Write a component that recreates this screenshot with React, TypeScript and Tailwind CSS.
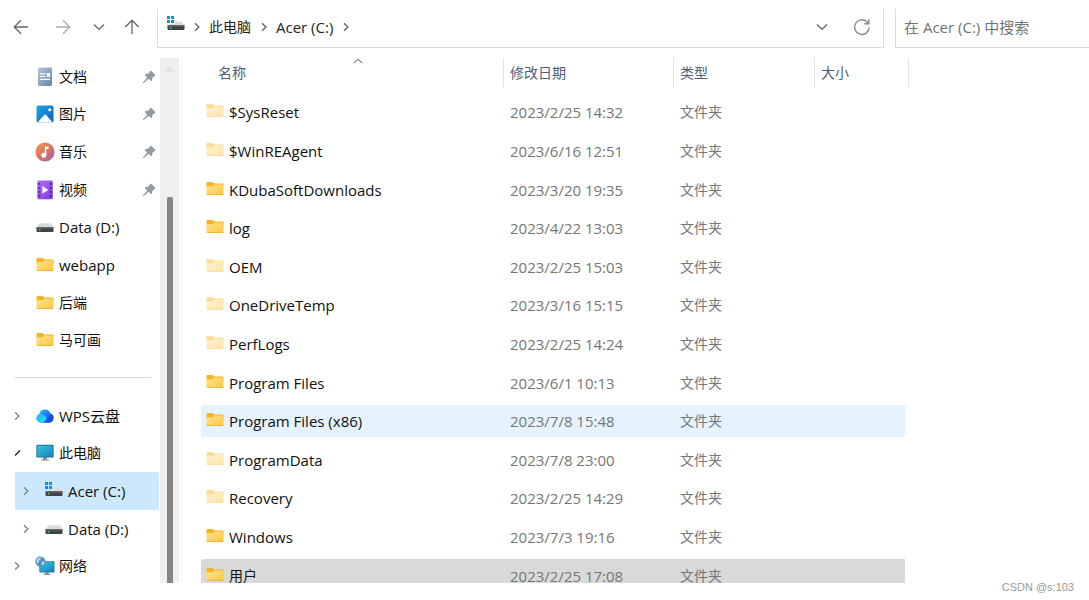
import React from "react";
import clsx from "clsx";

type IconProps = { className?: string };

const FolderIcon: React.FC<IconProps & { faded?: boolean }> = ({ className, faded }) => (
  <svg
    viewBox="0 0 18 16"
    className={clsx("w-[18px] h-4 shrink-0", faded && "opacity-45", className)}
  >
    <defs>
      <linearGradient id="folder" x1="0" y1="0" x2="1" y2="1">
        <stop offset="0" stopColor="#ffe394" />
        <stop offset="1" stopColor="#fdc63a" />
      </linearGradient>
    </defs>
    <path d="M0.5 2Q0.5 1 1.5 1H6Q6.6 1 7 1.5L8.2 2.6H16.7Q17.5 2.6 17.5 3.4V7H0.5Z" fill="#f7b31b" />
    <path d="M0.5 5.2H6.2Q6.8 5.2 7.2 4.8L8.3 3.4H17.5V13.2Q17.5 14 16.7 14H1.3Q0.5 14 0.5 13.2Z" fill="url(#folder)" />
    <path d="M0.6 13.5Q0.8 14.1 1.4 14.1H16.6Q17.2 14.1 17.4 13.5Z" fill="#e2a025" />
  </svg>
);

const DriveIcon: React.FC<IconProps & { system?: boolean }> = ({ className, system }) => (
  <svg viewBox="0 0 18 18" className={clsx("size-[18px] shrink-0", className)}>
    {system && (
      <path d="M0 0H3V3H0ZM4 0H7V3H4ZM0 4H3V7H0ZM4 4H7V7H4Z" fill="#1390df" />
    )}
    <path
      d={system ? "M8 5.4H14.7L17.6 9.5H1L2.5 8H8Z" : "M3.3 5.2H14.7L17.6 9.6H0.4Z"}
      fill="#d9dbde"
    />
    <rect x="0.5" y="9" width="17" height="5" rx="0.7" fill="#414345" />
    <rect x="0.5" y="9" width="17" height="1.5" rx="0.7" fill="#65686a" />
    <rect x="3" y="11" width="1.6" height="1.6" fill="#35c94b" />
  </svg>
);

const DocumentIcon = () => (
  <svg viewBox="0 0 18 20" className="w-[18px] h-5 shrink-0">
    <defs>
      <linearGradient id="doc" x1="0" y1="0" x2="1" y2="1">
        <stop offset="0" stopColor="#b3c7da" />
        <stop offset="1" stopColor="#6385a8" />
      </linearGradient>
    </defs>
    <rect x="2" y="0.5" width="14" height="18.5" rx="1.4" fill="url(#doc)" />
    <path d="M4 6.8H9.5M4 9.5H9.5M4 12.3H14" stroke="#fff" strokeWidth="1.2" />
    <rect x="10.7" y="6.2" width="3.4" height="3.6" fill="#fff" />
  </svg>
);

const PictureIcon = () => (
  <svg viewBox="0 0 18 18" className="size-[18px] shrink-0">
    <defs>
      <linearGradient id="pic" x1="0" y1="0" x2="1" y2="1">
        <stop offset="0" stopColor="#1ca5e8" />
        <stop offset="1" stopColor="#0a62bd" />
      </linearGradient>
    </defs>
    <rect x="0.5" y="0.5" width="17" height="17" rx="1.8" fill="url(#pic)" />
    <path d="M2 17L8.4 9.8Q9.2 9.1 10 9.8L16.2 17Q16 17.4 15.5 17.4H2.7Z" fill="#fff" />
    <circle cx="13.7" cy="4.8" r="1.5" fill="#fff" />
  </svg>
);

const MusicIcon = () => (
  <svg viewBox="0 0 20 20" className="-mx-px size-5 shrink-0">
    <defs>
      <linearGradient id="music" x1="0" y1="0" x2="1" y2="1">
        <stop offset="0.1" stopColor="#f29150" />
        <stop offset="0.5" stopColor="#d97462" />
        <stop offset="1" stopColor="#a45eb5" />
      </linearGradient>
    </defs>
    <circle cx="10" cy="10" r="9.6" fill="url(#music)" />
    <circle cx="8.8" cy="13.2" r="2.5" fill="#fff" />
    <path d="M9.8 4.5H13.6V7H11.3V13.2H9.8Z" fill="#fff" />
  </svg>
);

const VideoIcon = () => (
  <svg viewBox="0 0 18 20" className="w-[18px] h-5 shrink-0">
    <defs>
      <linearGradient id="video" x1="0" y1="0" x2="1" y2="1">
        <stop offset="0" stopColor="#b670f4" />
        <stop offset="1" stopColor="#7a3be0" />
      </linearGradient>
    </defs>
    <rect x="1.2" y="0.6" width="15.6" height="18.6" rx="1.4" fill="url(#video)" />
    <path
      d="M3.4 3V19M14.8 3V19"
      stroke="#4a1a93"
      strokeWidth="1.7"
      strokeDasharray="1.7 2.3"
    />
    <path d="M6.4 6L12.2 9.9L6.4 13.8Z" fill="#fff" />
  </svg>
);

const CloudIcon = () => (
  <svg viewBox="0 0 18 18" className="size-[18px] shrink-0">
    <defs>
      <linearGradient id="cloud" x1="0" y1="0" x2="1" y2="0.5">
        <stop offset="0.1" stopColor="#1fc8f4" />
        <stop offset="0.6" stopColor="#1a80fa" />
        <stop offset="1" stopColor="#1455ea" />
      </linearGradient>
      <linearGradient id="puff" x1="0" y1="0" x2="1" y2="0.8">
        <stop offset="0" stopColor="#1fb0f6" />
        <stop offset="1" stopColor="#25e0ea" />
      </linearGradient>
    </defs>
    <path d="M4.5 15.5A4.3 4.3 0 0 1 3.2 7.2A5.8 5.8 0 0 1 14.4 6.6A4.6 4.6 0 0 1 13.4 15.5Z" fill="url(#cloud)" />
    <path d="M3.2 7.2Q8.4 6.6 10.4 11.2Q9 15.4 4.5 15.5A4.3 4.3 0 0 1 3.2 7.2Z" fill="url(#puff)" />
    <path d="M6 15.5Q12.5 14.6 14.4 6.6A4.6 4.6 0 0 1 13.4 15.5Z" fill="#134fe6" />
  </svg>
);

const Monitor = () => (
  <>
    <defs>
      <linearGradient id="screen" x1="0" y1="0" x2="1" y2="1">
        <stop offset="0" stopColor="#35c4d6" />
        <stop offset="1" stopColor="#1587c4" />
      </linearGradient>
    </defs>
    <path d="M7 13H11V15.4H13V16.4H5V15.4H7Z" fill="#8b9399" />
    <rect x="0.4" y="0.8" width="17.2" height="12.8" rx="0.9" fill="#236c92" />
    <rect x="1.3" y="1.7" width="15.4" height="11" fill="url(#screen)" />
  </>
);

const ComputerIcon = () => (
  <svg viewBox="0 0 18 18" className="size-[18px] shrink-0">
    <Monitor />
  </svg>
);

const NetworkIcon = () => (
  <svg viewBox="0 0 20 20" className="-mx-px size-5 shrink-0">
    <g transform="translate(4 4.5) scale(0.88)">
      <Monitor />
    </g>
    <circle cx="5.4" cy="5.6" r="5.1" fill="#5195bd" />
    <path d="M2 3.4Q4 1.2 6.4 1.6Q5.8 3.4 4 4.4Q3.8 6.6 2.4 7.4Q0.9 5.6 2 3.4ZM7 6.2Q8.8 4.8 9.6 6Q9 8.6 7.4 9.4Q6.2 8 7 6.2Z" fill="#c3e1ee" />
  </svg>
);

const PinIcon = () => (
  <svg viewBox="0 0 14 14" className="mr-[3px] size-[14px] shrink-0">
    <path
      d="M8.2 1.1Q8.8 0.5 9.5 1.1L13.1 4.7Q13.6 5.4 12.8 6L10.6 7.4L9.9 10.4Q9.5 11.4 8.7 10.7L6.5 8.7L1.8 13.1L1 13.2L1 12.4L5.1 7.4L3.1 5.4Q2.6 4.5 3.6 4.1L6.6 3.5Z"
      fill="#919ba3"
    />
  </svg>
);

const Chevron: React.FC<IconProps> = ({ className }) => (
  <svg viewBox="0 0 6 10" className={clsx("w-1.5 h-2.5 shrink-0", className)}>
    <path d="M1 1.2L4.9 5L1 8.8" fill="none" stroke="currentColor" strokeWidth="1.4" />
  </svg>
);

const DownIcon = () => (
  <svg viewBox="0 0 14 14" className="size-3.5">
    <path d="M2 4.6L7 9.4L12 4.6" fill="none" stroke="currentColor" strokeWidth="1.4" />
  </svg>
);

const ArrowIcon: React.FC<IconProps> = ({ className }) => (
  <svg viewBox="0 0 16 16" className={clsx("size-4", className)}>
    <path d="M15 8H1.2M8 1.3L1.2 8L8 14.7" fill="none" stroke="currentColor" strokeWidth="1.3" />
  </svg>
);

type SideItem = {
  label: string;
  icon: React.ReactNode;
  pinned?: boolean;
  nested?: boolean;
  selected?: boolean;
  expand?: "open" | "closed";
};

const quickAccess: SideItem[] = [
  { label: "文档", icon: <DocumentIcon />, pinned: true },
  { label: "图片", icon: <PictureIcon />, pinned: true },
  { label: "音乐", icon: <MusicIcon />, pinned: true },
  { label: "视频", icon: <VideoIcon />, pinned: true },
  { label: "Data (D:)", icon: <DriveIcon /> },
  { label: "webapp", icon: <FolderIcon /> },
  { label: "后端", icon: <FolderIcon /> },
  { label: "马可画", icon: <FolderIcon /> },
];

const locations: SideItem[] = [
  { label: "WPS云盘", icon: <CloudIcon />, expand: "closed" },
  { label: "此电脑", icon: <ComputerIcon />, expand: "open" },
  { label: "Acer (C:)", icon: <DriveIcon system />, expand: "closed", nested: true, selected: true },
  { label: "Data (D:)", icon: <DriveIcon />, expand: "closed", nested: true },
  { label: "网络", icon: <NetworkIcon />, expand: "closed" },
];

const files = [
  { name: "$SysReset", date: "2023/2/25 14:32", hidden: true },
  { name: "$WinREAgent", date: "2023/6/16 12:51", hidden: true },
  { name: "KDubaSoftDownloads", date: "2023/3/20 19:35" },
  { name: "log", date: "2023/4/22 13:03" },
  { name: "OEM", date: "2023/2/25 15:03", hidden: true },
  { name: "OneDriveTemp", date: "2023/3/16 15:15", hidden: true },
  { name: "PerfLogs", date: "2023/2/25 14:24", hidden: true },
  { name: "Program Files", date: "2023/6/1 10:13" },
  { name: "Program Files (x86)", date: "2023/7/8 15:48", row: "bg-[#e5f3ff]" },
  { name: "ProgramData", date: "2023/7/8 23:00", hidden: true },
  { name: "Recovery", date: "2023/2/25 14:29", hidden: true },
  { name: "Windows", date: "2023/7/3 19:16" },
  { name: "用户", date: "2023/2/25 17:08", row: "bg-[#d9d9d9]" },
];

// latin labels are set one size larger than the purely Chinese ones
const labelSize = (label: string) =>
  /[a-z]/i.test(label) ? "text-[15px] leading-5" : "text-sm";

const SidebarItem: React.FC<{ item: SideItem }> = ({ item }) => (
  <a
    href="#"
    className={clsx(
      "flex items-center rounded-r-xs",
      item.nested && "pl-2",
      item.selected && "bg-[#cce8ff]"
    )}
  >
    <span className={clsx("flex shrink-0", item.nested ? "w-[22px]" : "w-[21px] overflow-hidden")}>
      {item.expand === "closed" && (
        <Chevron className={clsx("text-[#858585]", !item.nested && "-ml-px")} />
      )}
      {item.expand === "open" && (
        <svg viewBox="0 0 6 8" className="w-1.5 h-2">
          <path d="M0 6.5L5 1.5" fill="none" stroke="#222" strokeWidth="1.5" />
        </svg>
      )}
    </span>
    {item.icon}
    <span className={clsx("ml-[5px] flex-1 whitespace-nowrap", labelSize(item.label))}>
      {item.label}
    </span>
    {item.pinned && <PinIcon />}
  </a>
);

const Toolbar = () => (
  <header className="flex pt-[9px] text-[#666]">
    <div className="flex w-[157px] shrink-0 items-center justify-between pl-[13px] pr-[17px] pb-[3px]">
      <button aria-label="Back">
        <ArrowIcon />
      </button>
      <button aria-label="Forward" className="ml-2 text-[#aaa]">
        <ArrowIcon className="rotate-180" />
      </button>
      <button aria-label="Recent locations" className="ml-1">
        <DownIcon />
      </button>
      <button aria-label="Up">
        <ArrowIcon className="rotate-90" />
      </button>
    </div>
    <div className="flex h-[39px] flex-1 items-center border border-t-0 border-[#dcdcdc] pl-[9px] pr-3 pb-[3px]">
      <DriveIcon system className="mb-1" />
      <Chevron className="ml-[9px]" />
      <button className="ml-[9px] text-sm text-[#222]">此电脑</button>
      <Chevron className="ml-2.5" />
      <button className="ml-[9px] text-[15px] leading-5 text-[#222]">Acer (C:)</button>
      <Chevron className="ml-2.5" />
      <button aria-label="Show history" className="ml-auto">
        <DownIcon />
      </button>
      <button aria-label="Refresh" className="ml-6 text-[#888]">
        <svg viewBox="0 0 18 18" className="size-[18px]">
          <path
            d="M16.2 9.5A7.3 7.3 0 1 1 13.8 3.7L15.8 5.6M15.8 1.2V5.7H11.3"
            fill="none"
            stroke="currentColor"
            strokeWidth="1.4"
          />
        </svg>
      </button>
    </div>
    <div className="ml-[11px] flex w-[194px] shrink-0 border-b border-l border-[#dcdcdc]">
      <input
        type="text"
        aria-label="搜索"
        placeholder="在 Acer (C:) 中搜索"
        className="w-full pl-2 pb-0.5 text-[15px] outline-none placeholder:text-[#737373]"
      />
    </div>
  </header>
);

const Sidebar = () => (
  <nav className="h-[527px] w-[160px] shrink-0 grid auto-rows-fr pl-[15px] pr-px">
    {quickAccess.map((item) => (
      <SidebarItem key={item.label} item={item} />
    ))}
    <div className="flex items-center pr-2">
      <hr className="w-full border-[#d9d9d9]" />
    </div>
    {locations.map((item) => (
      <SidebarItem key={item.label} item={item} />
    ))}
  </nav>
);

const Scrollbar = () => (
  <div className="flex w-[19px] shrink-0 flex-col items-center bg-[#efefef] pt-[7px]">
    <svg viewBox="0 0 9 7" className="w-[9px] h-[7px] shrink-0">
      <path d="M4.5 0L9 7H0Z" fill="#e3e3e3" />
    </svg>
    <div className="mt-[125px] w-1.5 flex-1 rounded-t-xs bg-[#858585]" />
  </div>
);

const th = "border-r border-[#e2e2e2] pl-1.5 h-[29px] flex items-center";
const td = "border-y-3 border-transparent bg-clip-padding p-0";

const FileTable = () => (
  <table className="h-[537px] w-[708px] table-fixed border-separate border-spacing-0 text-left">
    <thead className="text-sm text-[#4c607a]">
      <tr className="h-[35px] align-top">
        <th className="w-[303px] p-0 font-normal">
          <div className={clsx(th, "relative")}>
            <button className="ml-[11px]">名称</button>
            <svg viewBox="0 0 10 6" className="absolute left-[152px] top-0 w-2.5 h-1.5">
              <path d="M0.8 5.2L5 1.2L9.2 5.2" fill="none" stroke="#777" strokeWidth="1.1" />
            </svg>
          </div>
        </th>
        <th className="w-[170px] p-0 font-normal">
          <div className={th}>
            <button>修改日期</button>
          </div>
        </th>
        <th className="w-[141px] p-0 font-normal">
          <div className={th}>
            <button>类型</button>
          </div>
        </th>
        <th className="p-0 font-normal">
          <div className={th}>
            <button>大小</button>
          </div>
        </th>
      </tr>
    </thead>
    <tbody className="text-sm text-[#767676]">
      {files.map((file) => (
        <tr key={file.name}>
          <td className={clsx(td, file.row, "rounded-l-sm")}>
            <div className="flex items-center gap-[5px] pl-[5px] text-[#111]">
              <FolderIcon faded={file.hidden} className="mb-0.5" />
              <span className={labelSize(file.name)}>{file.name}</span>
            </div>
          </td>
          <td className={clsx(td, file.row, "text-[15px] leading-5")}>
            <span className="pl-1.5">{file.date}</span>
          </td>
          <td className={clsx(td, file.row)}>
            <span className="pl-1.5">文件夹</span>
          </td>
          <td className={clsx(td, file.row, "border-r-4 rounded-r-sm")} />
        </tr>
      ))}
    </tbody>
  </table>
);

const App: React.FC = () => {
  return (
    <div className="flex h-screen flex-col overflow-hidden bg-white text-[#111] font-['Open_Sans','Noto_Sans_CJK_SC',sans-serif]">
      <Toolbar />
      <div className="mt-2.5 flex min-h-0 flex-1 overflow-hidden">
        <Sidebar />
        <Scrollbar />
        <main className="ml-0.5 flex-1 border-l border-[#f7f7f7] pl-[19px]">
          <FileTable />
        </main>
      </div>
      <footer className="h-[17px] shrink-0 pr-[15px] text-right text-[11px] leading-2 text-[#999] font-['Liberation_Sans',sans-serif]">
        CSDN @s:103
      </footer>
    </div>
  );
};

export default App;
